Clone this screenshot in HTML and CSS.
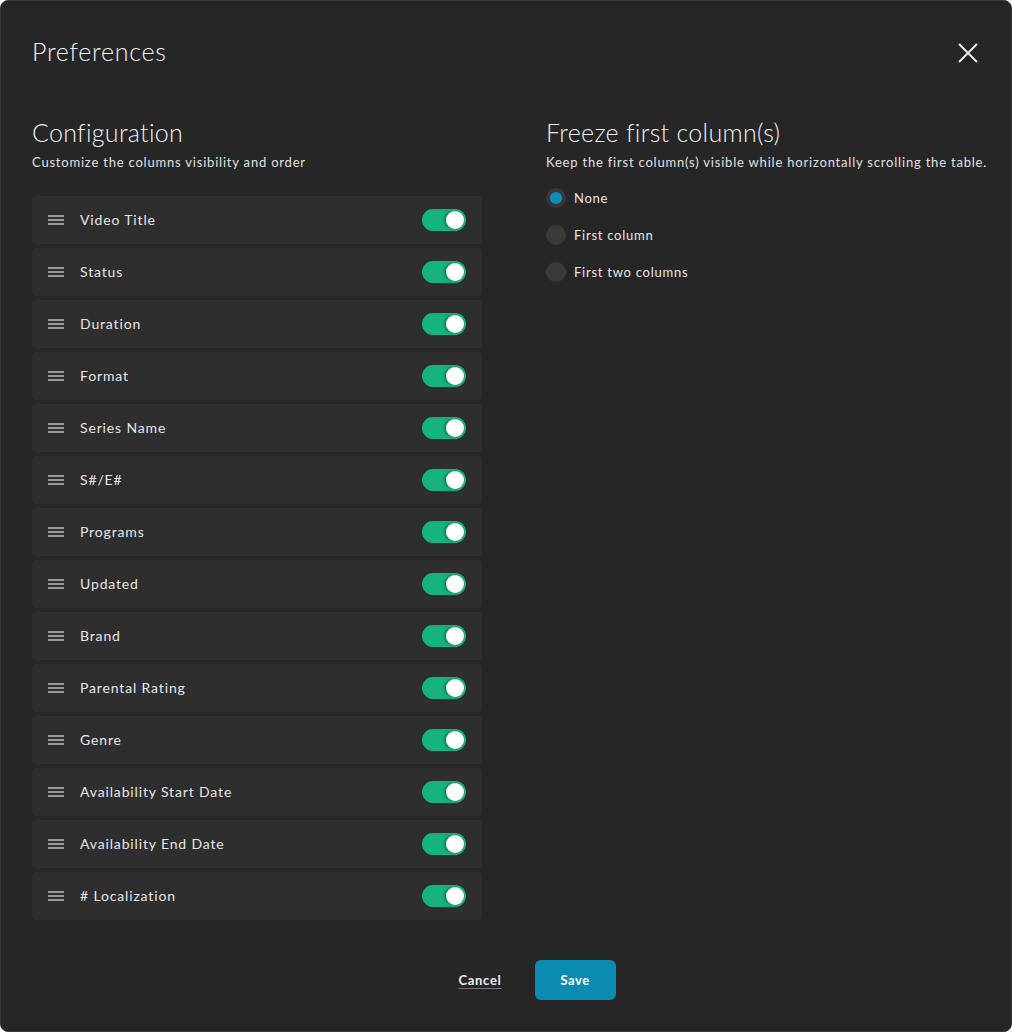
FILE: index.html
```html
<!DOCTYPE html>
<html lang="en">
<head>
    <meta charset="UTF-8">
    <meta name="viewport" content="width=device-width, initial-scale=1.0">
    <title>Preferences</title>
    <link rel="stylesheet" href="styles.css">
</head>
<body>
    <div class="modal">
        <header class="modal-header">
            <h1>Preferences</h1>
            <button class="close-btn" aria-label="Close">
                <svg width="20" height="20" viewBox="0 0 20 20">
                    <path d="M1 1 L19 19 M19 1 L1 19" stroke="#f2f2f2" stroke-width="1.8" fill="none"/>
                </svg>
            </button>
        </header>

        <div class="modal-body">
            <section class="config">
                <h2>Configuration</h2>
                <p class="hint">Customize the columns visibility and order</p>
                <ul class="column-list">
                    <li class="column-row"><span class="grip"></span><span class="label">Video Title</span><span class="toggle"></span></li>
                    <li class="column-row"><span class="grip"></span><span class="label">Status</span><span class="toggle"></span></li>
                    <li class="column-row"><span class="grip"></span><span class="label">Duration</span><span class="toggle"></span></li>
                    <li class="column-row"><span class="grip"></span><span class="label">Format</span><span class="toggle"></span></li>
                    <li class="column-row"><span class="grip"></span><span class="label">Series Name</span><span class="toggle"></span></li>
                    <li class="column-row"><span class="grip"></span><span class="label">S#/E#</span><span class="toggle"></span></li>
                    <li class="column-row"><span class="grip"></span><span class="label">Programs</span><span class="toggle"></span></li>
                    <li class="column-row"><span class="grip"></span><span class="label">Updated</span><span class="toggle"></span></li>
                    <li class="column-row"><span class="grip"></span><span class="label">Brand</span><span class="toggle"></span></li>
                    <li class="column-row"><span class="grip"></span><span class="label">Parental Rating</span><span class="toggle"></span></li>
                    <li class="column-row"><span class="grip"></span><span class="label">Genre</span><span class="toggle"></span></li>
                    <li class="column-row"><span class="grip"></span><span class="label">Availability Start Date</span><span class="toggle"></span></li>
                    <li class="column-row"><span class="grip"></span><span class="label">Availability End Date</span><span class="toggle"></span></li>
                    <li class="column-row"><span class="grip"></span><span class="label"># Localization</span><span class="toggle"></span></li>
                </ul>
            </section>

            <section class="freeze">
                <h2>Freeze first column(s)</h2>
                <p class="hint">Keep the first column(s) visible while horizontally scrolling the table.</p>
                <div class="radio-group">
                    <label class="radio"><span class="dot checked"></span>None</label>
                    <label class="radio"><span class="dot"></span>First column</label>
                    <label class="radio"><span class="dot"></span>First two columns</label>
                </div>
            </section>
        </div>

        <footer class="modal-footer">
            <button class="cancel-btn">Cancel</button>
            <button class="save-btn">Save</button>
        </footer>
    </div>
</body>
</html>
```

FILE: styles.css
```css
body {
    margin: 0;
    padding: 0;
    background-color: #ffffff;
    font-family: Lato, "Open Sans", sans-serif;
    color: #e6e6e6;
}
.modal {
    width: 1012px;
    height: 1032px;
    box-sizing: border-box;
    padding: 30px 31px 0 31px;
    background-color: #262626;
    border: 1px solid #3a3a3a;
    border-radius: 8px;
    display: flex;
    flex-direction: column;
}
.modal-header {
    display: flex;
    justify-content: space-between;
    align-items: center;
    height: 40px;
}
.modal-header h1 {
    margin: 0;
    font-size: 25px;
    font-weight: 300;
    letter-spacing: 0.75px;
    color: #f2f2f2;
}
.close-btn {
    background: none;
    border: none;
    padding: 0;
    margin-right: 2px;
    margin-top: 4px;
    width: 20px;
    height: 20px;
    cursor: pointer;
}
.modal-body {
    display: flex;
    gap: 64px;
    margin-top: 41px;
}
.config {
    width: 450px;
}
.freeze {
    flex: 1;
    min-width: 0;
}
h2 {
    margin: 0;
    font-size: 25px;
    font-weight: 300;
    letter-spacing: 0.3px;
    line-height: 40px;
    color: #f0f0f0;
}
.hint {
    margin: 0;
    font-size: 13px;
    line-height: 20px;
    letter-spacing: 0.8px;
    white-space: nowrap;
    color: #e0e0e0;
}
.column-list {
    list-style: none;
    margin: 24px 0 0 0;
    padding: 0;
    display: flex;
    flex-direction: column;
    gap: 4px;
}
.column-row {
    display: flex;
    align-items: center;
    height: 48px;
    padding: 0 16px;
    background-color: #2e2e2e;
    border-radius: 4px;
}
/* three bar drag handle */
.grip {
    width: 16px;
    height: 10px;
    border-top: 2px solid #9a9a9a;
    border-bottom: 2px solid #9a9a9a;
    box-sizing: border-box;
    position: relative;
    margin-right: 16px;
}
.grip::after {
    content: "";
    position: absolute;
    left: 0;
    right: 0;
    top: 2px;
    height: 2px;
    background-color: #9a9a9a;
}
.label {
    flex: 1;
    font-size: 14px;
    letter-spacing: 0.85px;
    padding-bottom: 2px;
    color: #e6e6e6;
}
.toggle {
    width: 44px;
    height: 22px;
    border-radius: 11px;
    background-color: #15b37f;
    position: relative;
}
.toggle::after {
    content: "";
    position: absolute;
    right: 2px;
    top: 2px;
    width: 18px;
    height: 18px;
    border-radius: 50%;
    background-color: #ffffff;
    box-shadow: -2px 0 3px rgba(0, 0, 0, 0.3);
}
.radio-group {
    display: flex;
    flex-direction: column;
    gap: 17px;
    margin-top: 16px;
}
.radio {
    display: flex;
    align-items: center;
    gap: 8px;
    height: 20px;
    font-size: 13px;
    letter-spacing: 0.75px;
    color: #e6e6e6;
}
.dot {
    width: 20px;
    height: 20px;
    border-radius: 50%;
    background-color: #3a3a3a;
    box-sizing: border-box;
}
.dot.checked {
    background-color: #0b8fbd;
    border: 4px solid #383838;
}
.modal-footer {
    display: flex;
    justify-content: center;
    align-items: center;
    gap: 33px;
    margin-top: 40px;
    padding-left: 62px;
}
.cancel-btn {
    background: none;
    border: none;
    padding: 0;
    font-family: inherit;
    font-size: 13px;
    font-weight: 700;
    letter-spacing: 0.7px;
    color: #ededed;
    text-decoration: underline;
    text-underline-offset: 3px;
    text-decoration-color: #777;
    cursor: pointer;
}
.save-btn {
    width: 81px;
    height: 40px;
    border: none;
    border-radius: 6px;
    background-color: #0a8cb0;
    font-family: inherit;
    font-size: 13px;
    font-weight: 700;
    letter-spacing: 0.5px;
    color: #ffffff;
    cursor: pointer;
}
```
